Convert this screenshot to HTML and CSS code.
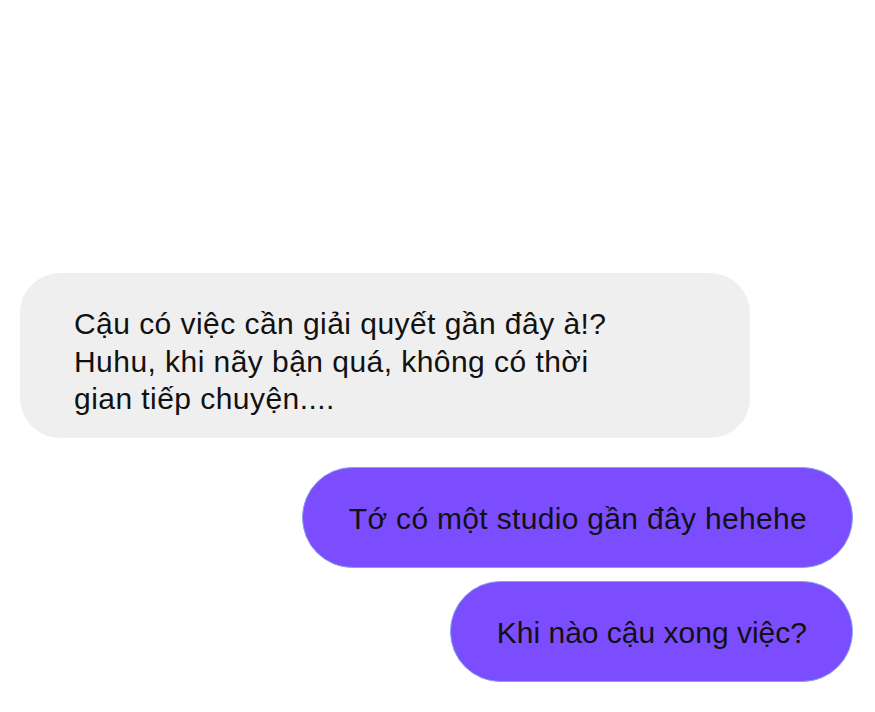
FILE: index.html
```html
<!DOCTYPE html>
<html lang="vi">
<head>
<meta charset="utf-8">
<link rel="stylesheet" href="styles.css">
</head>
<body>
<div class="chat">
  <div class="bubble received">
    <p class="text">Cậu có việc cần giải quyết gần đây à!? Huhu, khi nãy bận quá, không có thời gian tiếp chuyện....</p>
  </div>
  <div class="bubble sent first">Tớ có một studio gần đây hehehe</div>
  <div class="bubble sent">Khi nào cậu xong việc?</div>
</div>
</body>
</html>
```
FILE: styles.css
```css
html, body {
  margin: 0;
  padding: 0;
  background: #ffffff;
}
.chat {
  height: 712px;
  box-sizing: border-box;
  padding: 0 22px 30px 20px;
  display: flex;
  flex-direction: column;
  justify-content: flex-end;
  font-family: "Liberation Sans", Arial, sans-serif;
  font-size: 30px;
  color: #111111;
}
.bubble {
  box-sizing: border-box;
}
.received {
  align-self: flex-start;
  width: 730px;
  height: 165px;
  background: #efefef;
  border-radius: 40px;
  padding: 32px 54px 0 54px;
  margin-bottom: 29px;
}
.received .text {
  margin: 0;
  max-width: 560px;
  line-height: 37.5px;
  letter-spacing: 0.45px;
}
.sent {
  align-self: flex-end;
  height: 101px;
  display: flex;
  align-items: center;
  padding: 2px 45px 0 46px;
  background: #7b4dff;
  border: 1px solid #7fa3f0;
  border-radius: 51px;
  line-height: 30px;
}
.sent.first {
  margin-bottom: 13px;
  letter-spacing: 0.32px;
}
```
